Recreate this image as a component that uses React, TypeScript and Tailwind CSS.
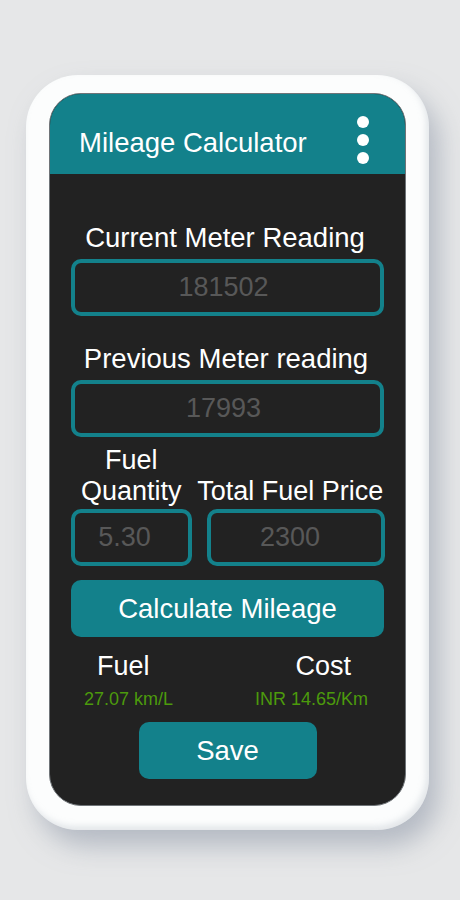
import React from 'react';

const font = { fontFamily: '"Liberation Sans", Arial, sans-serif' };

interface FieldProps {
  placeholder: string;
  className?: string;
}

const Field: React.FC<FieldProps> = ({ placeholder, className = '' }) => (
  <input
    readOnly
    placeholder={placeholder}
    className={`h-[57px] rounded-[10px] border-[4px] border-[#13818b] bg-transparent text-center text-[27px] text-white outline-none placeholder:text-[#585858] ${className}`}
  />
);

export default function App() {
  return (
    <div className="min-h-[900px] w-[460px] bg-[#e6e7e8] pt-[75px]" style={font}>
      {/* phone frame */}
      <div className="ml-[26px] w-[403px] rounded-[52px] bg-[#fcfdfd] px-[23px] pb-[24px] pt-[18px] shadow-[10px_16px_26px_rgba(140,150,165,0.55),inset_-3px_-4px_6px_rgba(180,188,198,0.35)]">
        <div className="overflow-hidden rounded-[32px] border border-[#6f7478] bg-[#222222]">
          {/* header */}
          <div className="flex h-[80px] items-center justify-between bg-[#13818b] pl-[29px] pr-[36px] pt-[16px]">
            <h1 className="text-[27.5px] leading-[31px] text-white">Mileage Calculator</h1>
            <div className="-mt-[4px] flex flex-col gap-[6px]">
              <span className="h-[12px] w-[12px] rounded-full bg-white" />
              <span className="h-[12px] w-[12px] rounded-full bg-white" />
              <span className="h-[12px] w-[12px] rounded-full bg-white" />
            </div>
          </div>

          {/* body */}
          <div className="flex flex-col px-[21px] pb-[26px] pt-[48px]">
            <label className="whitespace-nowrap pr-[5px] text-center text-[27.5px] leading-[31px] text-white">Current Meter Reading</label>
            <Field placeholder="181502" className="mt-[6px] w-full pr-[8px]" />

            <label className="mt-[27px] whitespace-nowrap pr-[3px] text-center text-[27.5px] leading-[31px] text-white">Previous Meter reading</label>
            <Field placeholder="17993" className="mt-[6px] w-full pr-[8px]" />

            <div className="mt-[8px] flex items-end gap-[5px]">
              <span className="w-[121px] text-center text-[27px] leading-[31px] text-white">Fuel Quantity</span>
              <span className="w-[188px] whitespace-nowrap text-center text-[27px] leading-[31px] text-white">Total Fuel Price</span>
            </div>
            <div className="mt-[2px] flex gap-[15px]">
              <Field placeholder="5.30" className="w-[121px] pr-[14px]" />
              <Field placeholder="2300" className="w-[178px] pr-[12px]" />
            </div>

            <button className="mt-[14px] h-[57px] w-full rounded-[10px] bg-[#13818b] text-[27.5px] text-white">
              Calculate Mileage
            </button>

            <div className="mt-[14px] flex pl-[26px] text-[27px] leading-[31px] text-white">
              <span>Fuel</span>
              <span className="ml-[146px]">Cost</span>
            </div>
            <div className="mt-[7px] flex pl-[13px] text-[18px] leading-[21px] text-[#4c9a0c]">
              <span>27.07 km/L</span>
              <span className="ml-[82px]">INR 14.65/Km</span>
            </div>

            <button className="mx-auto mt-[12px] h-[57px] w-[178px] rounded-[10px] bg-[#13818b] text-[27.5px] text-white">
              Save
            </button>
          </div>
        </div>
      </div>
    </div>
  );
}
